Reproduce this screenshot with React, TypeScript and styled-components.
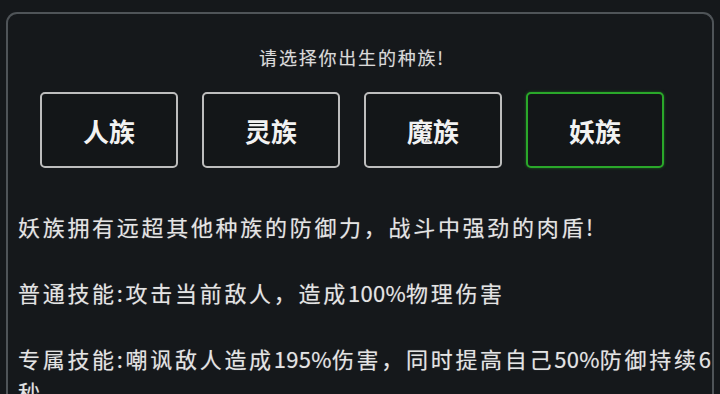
import React, { useState } from 'react';
import styled, { createGlobalStyle } from 'styled-components';

const GlobalStyle = createGlobalStyle`
  html, body {
    margin: 0;
    padding: 0;
    background: #15181b;
    overflow: hidden;
  }
  body {
    font-family: 'Noto Sans CJK SC', 'Noto Sans', sans-serif;
  }
`

const Frame = styled.div`
  box-sizing: border-box;
  margin: 12px 6px 0 6px;
  height: 400px;
  padding: 31px 0 0 10px;
  border: 2px solid #4f5458;
  border-bottom: none;
  border-radius: 11px 11px 0 0;
`

const Title = styled.div`
  padding-right: 26px;
  text-align: center;
  font-size: 18px;
  line-height: 24px;
  letter-spacing: 1.8px;
  color: #dadada;
  text-shadow: 0 0 1px rgba(255, 255, 255, 0.3);
`

const RaceRow = styled.div`
  display: flex;
  justify-content: center;
  gap: 24px;
  margin-top: 23px;
  padding-right: 26px;
`

const RaceButton = styled.button<{ $active: boolean }>`
  box-sizing: border-box;
  width: 138px;
  height: 76px;
  padding: 0;
  background: #131618;
  border: 2px solid ${p => (p.$active ? '#2aa82a' : '#bdbdbd')};
  border-radius: 5px;
  box-shadow: ${p => (p.$active ? '0 0 3px rgba(40, 180, 40, 0.5)' : 'none')};
  font-family: 'Noto Sans CJK SC', sans-serif;
  font-size: 26px;
  font-weight: 700;
  color: #f2f2f2;
  cursor: pointer;
`

const Description = styled.div`
  margin-top: 42px;
  font-size: 22px;
  line-height: 33px;
  letter-spacing: 2.7px;
  color: #e4e4e4;
  text-shadow: 0 0 1px rgba(255, 255, 255, 0.35);
  white-space: nowrap;
`

const Para = styled.p`
  margin: 0 0 33px 0;
`

const Num = styled.span`
  letter-spacing: 0.3px;
`

const races = ['人族', '灵族', '魔族', '妖族'];

const App: React.FC = () => {
  const [selected, setSelected] = useState(3);
  return (
    <>
      <GlobalStyle />
      <Frame>
        <Title>请选择你出生的种族!</Title>
        <RaceRow>
          {races.map((r, i) => (
            <RaceButton key={r} $active={i === selected} onClick={() => setSelected(i)}>
              {r}
            </RaceButton>
          ))}
        </RaceRow>
        <Description>
          <Para>妖族拥有远超其他种族的防御力，战斗中强劲的肉盾!</Para>
          <Para>普通技能:攻击当前敌人，造成<Num>100%</Num>物理伤害</Para>
          <Para>
            专属技能:嘲讽敌人造成<Num>195%</Num>伤害，同时提高自己<Num>50%</Num>防御持续<Num>6</Num>
            <br />秒
          </Para>
        </Description>
      </Frame>
    </>
  )
}

export default App;
